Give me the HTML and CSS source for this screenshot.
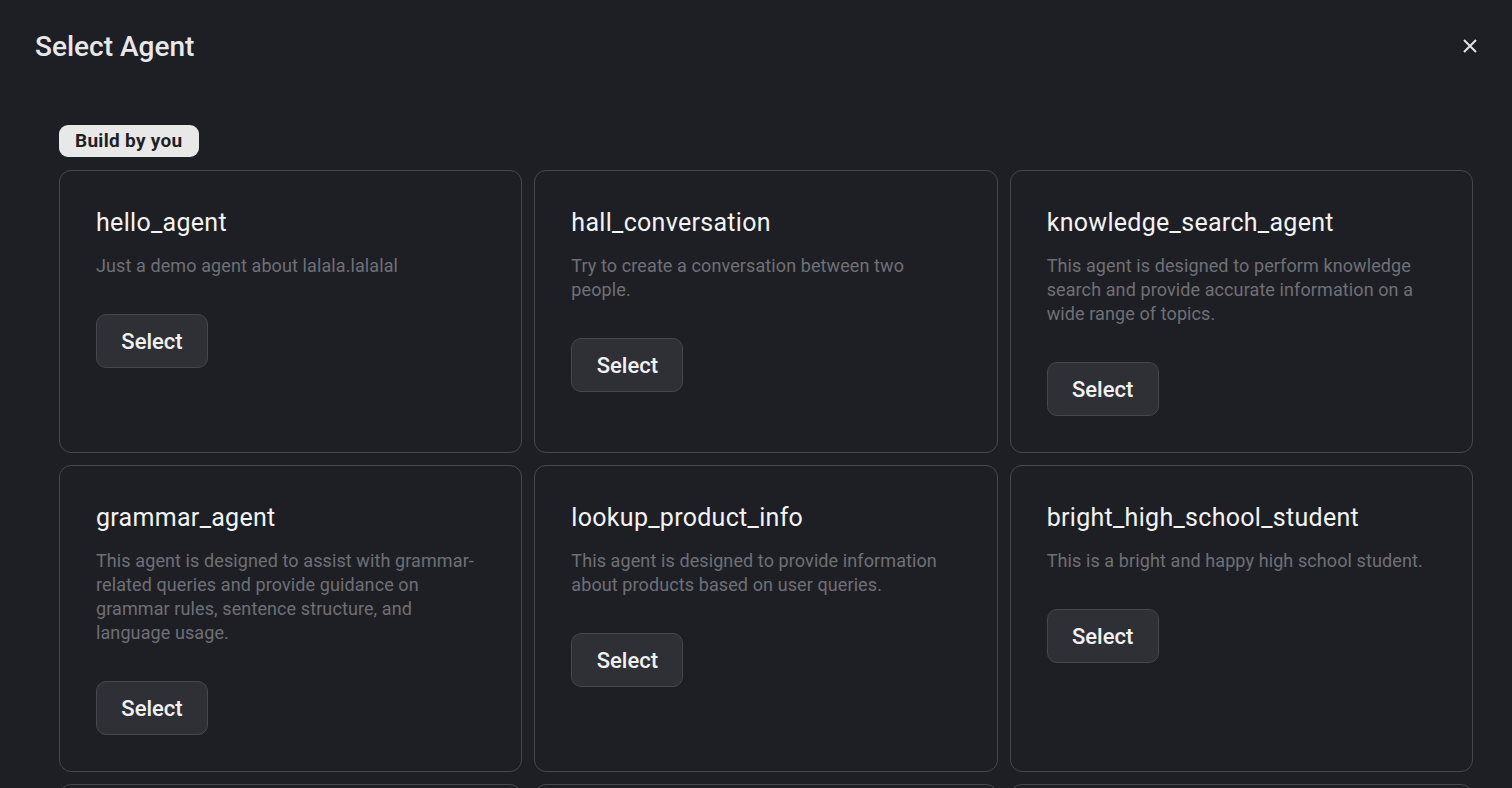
FILE: index.html
```html
<!DOCTYPE html>
<html lang="en">
<head>
<meta charset="utf-8">
<title>Select Agent</title>
<link rel="stylesheet" href="styles.css">
</head>
<body>
<div class="dialog">
  <header class="dialog-header">
    <h1 class="dialog-title">Select Agent</h1>
    <button class="close-btn" aria-label="Close">
      <svg width="16" height="16" viewBox="0 0 16 16"><path d="M2 2L14 14M14 2L2 14" stroke="#e3e3e3" stroke-width="2" fill="none"/></svg>
    </button>
  </header>
  <section class="dialog-body">
    <span class="badge">Build by you</span>
    <div class="agent-grid">
      <div class="agent-card">
        <h2 class="agent-name">hello_agent</h2>
        <p class="agent-desc">Just a demo agent about lalala.lalalal</p>
        <button class="select-btn">Select</button>
      </div>
      <div class="agent-card">
        <h2 class="agent-name">hall_conversation</h2>
        <p class="agent-desc">Try to create a conversation between two people.</p>
        <button class="select-btn">Select</button>
      </div>
      <div class="agent-card">
        <h2 class="agent-name">knowledge_search_agent</h2>
        <p class="agent-desc">This agent is designed to perform knowledge search and provide accurate information on a wide range of topics.</p>
        <button class="select-btn">Select</button>
      </div>
      <div class="agent-card">
        <h2 class="agent-name">grammar_agent</h2>
        <p class="agent-desc">This agent is designed to assist with grammar-related queries and provide guidance on grammar rules, sentence structure, and language usage.</p>
        <button class="select-btn">Select</button>
      </div>
      <div class="agent-card">
        <h2 class="agent-name">lookup_product_info</h2>
        <p class="agent-desc">This agent is designed to provide information about products based on user queries.</p>
        <button class="select-btn">Select</button>
      </div>
      <div class="agent-card">
        <h2 class="agent-name">bright_high_school_student</h2>
        <p class="agent-desc">This is a bright and happy high school student.</p>
        <button class="select-btn">Select</button>
      </div>
      <div class="agent-card agent-card-empty"></div>
      <div class="agent-card agent-card-empty"></div>
      <div class="agent-card agent-card-empty"></div>
    </div>
  </section>
</div>
</body>
</html>
```
FILE: styles.css
```css
* { box-sizing: border-box; }
html, body {
  margin: 0;
  height: 100%;
  background: #1e1f25;
  overflow: hidden;
}
body {
  font-family: Roboto, "Liberation Sans", sans-serif;
  color: #f1f1f1;
}
.dialog {
  height: 788px;
  overflow: hidden;
}
.dialog-header {
  display: flex;
  align-items: center;
  justify-content: space-between;
  padding: 26px 34px 0 35px;
  height: 66px;
}
.dialog-title {
  margin: 0;
  font-size: 28px;
  font-weight: 500;
  color: #e8e8ea;
  letter-spacing: 0;
}
.close-btn {
  background: none;
  border: none;
  padding: 0;
  width: 16px;
  height: 16px;
  display: flex;
  cursor: pointer;
}
.dialog-body {
  padding: 59px 39px 0 59px;
  display: flex;
  flex-direction: column;
  align-items: flex-start;
}
.badge {
  display: inline-block;
  background: #e8e8e8;
  color: #1e1f25;
  font-weight: 700;
  font-size: 19px;
  letter-spacing: 0.3px;
  line-height: 32px;
  height: 32px;
  padding: 0 16px;
  border-radius: 9px;
  margin-bottom: 13px;
}
.agent-grid {
  width: 100%;
  display: grid;
  grid-template-columns: repeat(3, 1fr);
  gap: 12px;
}
.agent-card {
  border: 1px solid #47484e;
  border-radius: 12px;
  padding: 36px;
  display: flex;
  flex-direction: column;
  align-items: flex-start;
}
.agent-card-empty {
  min-height: 200px;
}
.agent-name {
  margin: 0;
  font-size: 25px;
  font-weight: 400;
  letter-spacing: 0.3px;
  line-height: 32px;
  color: #f3f3f3;
}
.agent-desc {
  margin: 15px 0 36px;
  font-size: 18px;
  letter-spacing: 0.1px;
  line-height: 24px;
  color: #6f7076;
}
.select-btn {
  font-family: inherit;
  font-size: 22px;
  font-weight: 500;
  color: #f1f1f1;
  background: #2f3035;
  border: 1px solid #46474c;
  border-radius: 10px;
  width: 112px;
  height: 54px;
  cursor: pointer;
}
```
